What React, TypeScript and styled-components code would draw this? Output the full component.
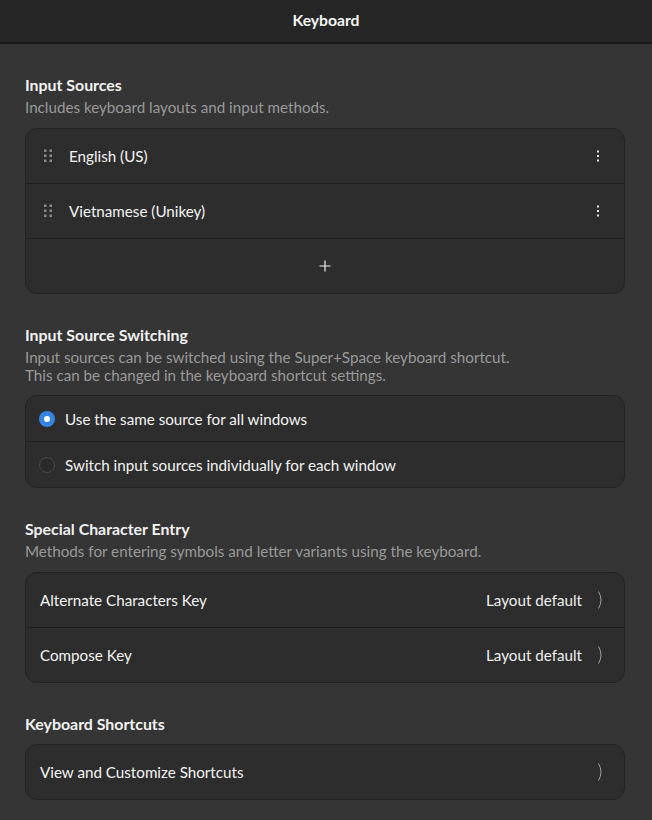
import React from "react";
import styled, { createGlobalStyle } from "styled-components";

const GlobalStyle = createGlobalStyle`
  html, body {
    margin: 0;
    padding: 0;
    background: #353535;
  }
  body {
    font-family: "Lato", "Noto Sans", sans-serif;
    color: #ffffff;
    -webkit-font-smoothing: antialiased;
  }
`;

const Window = styled.div`
  width: 652px;
  height: 820px;
  display: flex;
  flex-direction: column;
  background: #353535;
  overflow: hidden;
`;

const HeaderBar = styled.header`
  height: 44px;
  box-sizing: border-box;
  padding-bottom: 3px;
  flex-shrink: 0;
  display: flex;
  align-items: center;
  justify-content: center;
  background: #262626;
  border-bottom: 2px solid #1a1a1a;
  font-size: 15.7px;
  font-weight: 700;
  color: #f6f6f6;
`;

const Content = styled.main`
  display: flex;
  flex-direction: column;
  gap: 31px;
  padding: 31px 27px 0 25px;
`;

const Section = styled.section`
  display: flex;
  flex-direction: column;
`;

const SectionTitle = styled.h2`
  margin: 0;
  font-size: 15.9px;
  font-weight: 700;
  line-height: 20px;
  color: #f2f2f2;
`;

const SectionText = styled.p`
  margin: 3px 0 0;
  font-size: 15.2px;
  line-height: 18px;
  color: #9a9a9a;
`;

const Card = styled.div<{ $gap?: number }>`
  margin-top: ${(p) => p.$gap ?? 11}px;
  display: flex;
  flex-direction: column;
  background: #2d2d2d;
  border: 1px solid #222222;
  border-radius: 12px;
  overflow: hidden;
`;

const Row = styled.div<{ $height?: number; $pad?: number; $gap?: number }>`
  height: ${(p) => p.$height ?? 54}px;
  display: flex;
  align-items: center;
  gap: ${(p) => p.$gap ?? 12}px;
  padding: 0 14px 0 ${(p) => p.$pad ?? 14}px;
  font-size: 15.2px;
  color: #f4f4f4;

  & + & {
    border-top: 1px solid #1f1f1f;
  }
`;

const Label = styled.span`
  flex: 1;
`;

const Value = styled.span`
  color: #f0f0f0;
`;

const AddRow = styled(Row)`
  justify-content: center;
`;

const Handle = styled.svg`
  width: 8px;
  height: 16px;
  margin-left: 3px;
  margin-right: 5px;
`;

const Radio = styled.span<{ $checked?: boolean }>`
  width: 16px;
  height: 16px;
  box-sizing: border-box;
  border-radius: 50%;
  flex-shrink: 0;
  background: ${(p) => (p.$checked ? "#3584e4" : "#2a2a2a")};
  border: ${(p) => (p.$checked ? "none" : "1.5px solid #4a4a4a")};
  display: flex;
  align-items: center;
  justify-content: center;
  margin-left: -1px;

  &::after {
    content: "";
    display: ${(p) => (p.$checked ? "block" : "none")};
    width: 6px;
    height: 6px;
    border-radius: 50%;
    background: #ffffff;
  }
`;

const DragHandle = () => (
  <Handle viewBox="0 0 8 16">
    {[1.5, 6.5, 11.5].map((y) =>
      [0, 5.5].map((x) => <rect key={`${x}-${y}`} x={x} y={y} width="2.5" height="2.5" fill="#8a8a8a" />)
    )}
  </Handle>
);

const Kebab = () => (
  <svg width="16" height="16" viewBox="0 0 16 16" style={{ marginRight: 4 }}>
    <rect x="7" y="2.5" width="2" height="2" fill="#e8e8e8" />
    <rect x="7" y="7" width="2" height="2" fill="#e8e8e8" />
    <rect x="7" y="11.5" width="2" height="2" fill="#e8e8e8" />
  </svg>
);

const Chevron = () => (
  <svg width="12" height="20" viewBox="0 0 12 20" style={{ marginRight: 4 }}>
    <path d="M4.5 1.5 Q9.5 10 4.5 18.5" fill="none" stroke="#a0a0a0" strokeWidth="1" />
  </svg>
);

const Plus = () => (
  <svg width="12" height="12" viewBox="0 0 12 12">
    <path d="M6 0.5 V11.5 M0.5 6 H11.5" stroke="#f2f2f2" strokeWidth="1.2" />
  </svg>
);

const sources = ["English (US)", "Vietnamese (Unikey)"];

export default function App() {
  return (
    <Window>
      <GlobalStyle />
      <HeaderBar>Keyboard</HeaderBar>
      <Content>
        <Section>
          <SectionTitle>Input Sources</SectionTitle>
          <SectionText>Includes keyboard layouts and input methods.</SectionText>
          <Card $gap={12}>
            {sources.map((s) => (
              <Row key={s} $pad={15}>
                <DragHandle />
                <Label>{s}</Label>
                <Kebab />
              </Row>
            ))}
            <AddRow>
              <Plus />
            </AddRow>
          </Card>
        </Section>

        <Section>
          <SectionTitle>Input Source Switching</SectionTitle>
          <SectionText>
            Input sources can be switched using the Super+Space keyboard shortcut.
            <br />
            This can be changed in the keyboard shortcut settings.
          </SectionText>
          <Card $gap={11}>
            <Row $height={45} $gap={10}>
              <Radio $checked />
              <Label>Use the same source for all windows</Label>
            </Row>
            <Row $height={45} $gap={10}>
              <Radio />
              <Label>Switch input sources individually for each window</Label>
            </Row>
          </Card>
        </Section>

        <Section>
          <SectionTitle>Special Character Entry</SectionTitle>
          <SectionText>Methods for entering symbols and letter variants using the keyboard.</SectionText>
          <Card $gap={12}>
            <Row>
              <Label>Alternate Characters Key</Label>
              <Value>Layout default</Value>
              <Chevron />
            </Row>
            <Row>
              <Label>Compose Key</Label>
              <Value>Layout default</Value>
              <Chevron />
            </Row>
          </Card>
        </Section>

        <Section>
          <SectionTitle>Keyboard Shortcuts</SectionTitle>
          <Card $gap={10}>
            <Row>
              <Label>View and Customize Shortcuts</Label>
              <Chevron />
            </Row>
          </Card>
        </Section>
      </Content>
    </Window>
  );
}
